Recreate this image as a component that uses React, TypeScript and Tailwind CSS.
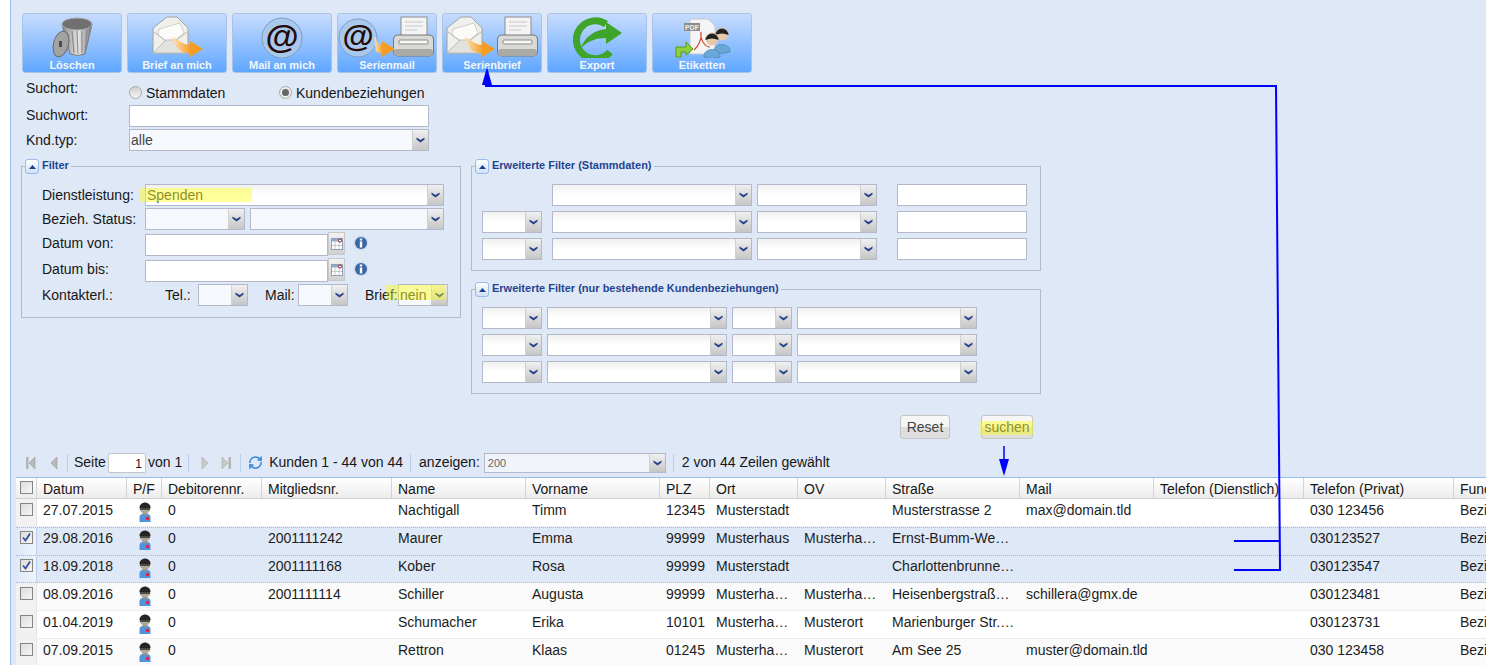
import React from 'react';
import { RefreshCw } from 'lucide-react';

const rowGrid =
  'grid grid-cols-[21px_90px_35px_100px_130px_134px_134px_50px_88px_88px_134px_134px_150px_150px_100px] w-[1500px]';

const headers = ['Datum', 'P/F', 'Debitorennr.', 'Mitgliedsnr.', 'Name', 'Vorname', 'PLZ', 'Ort', 'OV', 'Straße', 'Mail', 'Telefon (Dienstlich)', 'Telefon (Privat)', 'Function'];

const rows = [
  { datum: '27.07.2015', mitglied: '', name: 'Nachtigall', vorname: 'Timm', plz: '12345', ort: 'Musterstadt', ov: '', strasse: 'Musterstrasse 2', mail: 'max@domain.tld', privat: '030 123456', kind: 'white' },
  { datum: '29.08.2016', mitglied: '2001111242', name: 'Maurer', vorname: 'Emma', plz: '99999', ort: 'Musterhaus', ov: 'Musterha…', strasse: 'Ernst-Bumm-We…', mail: '', privat: '030123527', kind: 'selected' },
  { datum: '18.09.2018', mitglied: '2001111168', name: 'Kober', vorname: 'Rosa', plz: '99999', ort: 'Musterstadt', ov: '', strasse: 'Charlottenbrunne…', mail: '', privat: '030123547', kind: 'selectedLast' },
  { datum: '08.09.2016', mitglied: '2001111114', name: 'Schiller', vorname: 'Augusta', plz: '99999', ort: 'Musterha…', ov: 'Musterha…', strasse: 'Heisenbergstraß…', mail: 'schillera@gmx.de', privat: '030123481', kind: 'alt' },
  { datum: '01.04.2019', mitglied: '', name: 'Schumacher', vorname: 'Erika', plz: '10101', ort: 'Musterha…', ov: 'Musterort', strasse: 'Marienburger Str.…', mail: '', privat: '030123731', kind: 'white' },
  { datum: '07.09.2015', mitglied: '', name: 'Rettron', vorname: 'Klaas', plz: '01245', ort: 'Musterha…', ov: 'Musterort', strasse: 'Am See 25', mail: 'muster@domain.tld', privat: '030 123458', kind: 'alt' },
];

function Envelope({ x = 0 }: { x?: number }) {
  return (
    <g transform={`translate(${x} 0)`}>
      <path d="M0 14 L14 3 H24 L35 14 V39 H0 Z" fill="#efefec" stroke="#a2a29e" strokeLinejoin="round" />
      <path d="M5 21 L6 15 L27 9 L31 19 L18 30 Z" fill="#fbfbfa" stroke="#cfcfcc" />
      <path d="M0 39 L13 26 L22 26 L35 39 Z" fill="#e2e2df" stroke="#bcbcb8" />
      <path d="M1 18 L13 27 M34 18 L22 27" stroke="#b9b9b5" fill="none" />
    </g>
  );
}

function OrangeArrow({ x1, tip }: { x1: number; tip: number }) {
  const base = tip - 13;
  return (
    <g>
      <path d={`M${x1} 23 C${x1 + 5} 24 ${base - 8} 31 ${base + 1} 31 V39 C${base - 10} 40 ${x1 + 3} 33 ${x1} 23 Z`} fill="url(#orange)" />
      <path d={`M${base} 27 L${tip} 35 L${base} 43 Z`} fill="#f59c25" />
    </g>
  );
}

function Printer({ x }: { x: number }) {
  return (
    <g transform={`translate(${x} 0)`}>
      <rect x="8" y="3" width="26" height="22" fill="#f4f4f4" stroke="#8d8d8d" />
      <path d="M12 8 H30 M12 12 H30 M12 16 H24" stroke="#c8c8c8" />
      <rect x="0.5" y="21" width="40" height="21" rx="4" fill="#d9d9d6" stroke="#77777a" />
      <rect x="6" y="26" width="29" height="4" rx="1" fill="#f7f7f5" stroke="#8b8b8b" />
      <rect x="1" y="35" width="39" height="7" rx="3" fill="#a9a9a6" />
    </g>
  );
}

function AtCircle({ cx, r, size }: { cx: number; r: number; size: number }) {
  return (
    <g>
      <circle cx={cx} cy={24} r={r} fill="#a9c9ec" stroke="#7c9cc4" />
      <text x={cx} y={24 + size * 0.29} textAnchor="middle" fontSize={size} fontWeight="700" fontFamily="Liberation Sans, sans-serif" fill="#260a0a">
        @
      </text>
    </g>
  );
}

function Buddy({ cx, cy }: { cx: number; cy: number }) {
  return (
    <g>
      <path d={`M${cx - 8} ${cy + 18} C${cx - 9} ${cy + 8} ${cx + 9} ${cy + 8} ${cx + 8} ${cy + 18} Q${cx} ${cy + 21} ${cx - 8} ${cy + 18} Z`} fill="#6aa7d6" stroke="#3f7fb2" strokeWidth="0.6" />
      <circle cx={cx} cy={cy} r={6.5} fill="#e7c9a8" />
      <path d={`M${cx - 6.5} ${cy + 1} A6.5 6.5 0 0 1 ${cx + 6.5} ${cy + 1} Q${cx} ${cy - 2} ${cx - 6.5} ${cy + 1} Z`} fill="#222" />
    </g>
  );
}

function ToolIcon({ kind }: { kind: string }) {
  return (
    <svg width="98" height="44" viewBox="0 0 98 44" className="block shrink-0">
      <defs>
        <linearGradient id="can" x1="0" x2="1" y1="0" y2="0">
          <stop offset="0" stopColor="#858585" />
          <stop offset="0.55" stopColor="#e6e6e6" />
          <stop offset="1" stopColor="#777" />
        </linearGradient>
        <linearGradient id="orange" x1="0" x2="1" y1="0" y2="0">
          <stop offset="0" stopColor="#fbe3bb" />
          <stop offset="1" stopColor="#f59c25" />
        </linearGradient>
      </defs>
      {kind === 'trash' && (
        <g>
          <path d="M39 10 L47 40 Q55 43 62 40 L69 10 Z" fill="url(#can)" stroke="#777" />
          <path d="M49 17 L51 39 M54 17 L55 40 M59 17 L59 39 M64 16 L62 38" stroke="#888" strokeWidth="1.1" />
          <ellipse cx="54" cy="10" rx="15" ry="6" fill="#707070" stroke="#a8a8a8" />
          <ellipse cx="38" cy="30" rx="7.5" ry="13" transform="rotate(15 38 30)" fill="#a2a2a2" stroke="#6a6a6a" />
          <rect x="36" y="27" width="3" height="6" fill="#4c4c4c" />
        </g>
      )}
      {kind === 'brief' && (
        <g>
          <Envelope x={25} />
          <OrangeArrow x1={44} tip={75} />
        </g>
      )}
      {kind === 'mail' && <AtCircle cx={49} r={20} size={34} />}
      {kind === 'serienmail' && (
        <g>
          <AtCircle cx={20} r={19} size={32} />
          <Printer x={55} />
          <OrangeArrow x1={36} tip={57} />
        </g>
      )}
      {kind === 'serienbrief' && (
        <g>
          <Envelope x={4} />
          <Printer x={54} />
          <OrangeArrow x1={22} tip={52} />
        </g>
      )}
      {kind === 'export' && (
        <g>
          <path d="M58 10 A19 19 0 1 0 62 38" fill="none" stroke="#3ea42a" strokeWidth="7" />
          <path d="M33 34 C36 24 46 16 58 15 V8 L74 19 L58 30 V24 C48 24 40 27 33 34 Z" fill="#3ea42a" />
        </g>
      )}
      {kind === 'etiketten' && (
        <g>
          <path d="M37 5 H55 L62 12 V40 H37 Z" fill="#f5f5f5" stroke="#c8c8c8" />
          <rect x="31" y="9" width="16" height="8" fill="#8c8c8c" />
          <text x="39" y="15.5" textAnchor="middle" fontSize="7" fontWeight="700" fontFamily="Liberation Sans, sans-serif" fill="#f0f0f0">
            PDF
          </text>
          <path d="M41 36 C46 32 49 24 48 18 C47 26 52 33 57 33" fill="none" stroke="#d24a3a" strokeWidth="1.2" />
          <path d="M23 43 V33 H33 V28 L40 35 L33 41 V38 H28 V43 Z" fill="#8fce3f" stroke="#5a9a1e" />
          <Buddy cx={69} cy={20} />
          <Buddy cx={59} cy={25} />
        </g>
      )}
    </svg>
  );
}

function ToolButton({ kind, label }: { kind: string; label: string }) {
  return (
    <div className="w-[100px] h-[60px] shrink-0 flex flex-col items-center rounded-[3px] border border-[#a9c3e8] bg-gradient-to-b from-[#c7dcfd] to-[#5da6ff]">
      <ToolIcon kind={kind} />
      <span className="text-[11px] leading-[14px] font-bold text-[#f2f6fb] whitespace-nowrap">{label}</span>
    </div>
  );
}

function Select({ width, value, tint }: { width: string; value?: string; tint?: boolean }) {
  return (
    <div className={`${width} h-[22px] shrink-0 flex border border-[#b5b8c8] ${tint ? 'bg-[#f5f8fd]' : 'bg-gradient-to-b from-[#f0f0f0] via-white to-white'}`}>
      <span className="flex-1 min-w-0 pl-[1px] leading-[20px] text-[#444] whitespace-nowrap overflow-hidden">{value}</span>
      <span className="w-[16px] shrink-0 flex items-center justify-center border-l border-[#d0d0d0] bg-gradient-to-b from-[#f0f0f0] to-[#c6c6c6]">
        <svg width="9" height="6" viewBox="0 0 9 6">
          <path d="M0.5 0.5 L4.5 3 L8.5 0.5 V2.5 L4.5 5.5 L0.5 2.5 Z" fill="#24418a" />
        </svg>
      </span>
    </div>
  );
}

function Legend({ title }: { title: string }) {
  return (
    <div className="absolute -top-[8px] left-[3px] flex items-center bg-[#dfe8f6] pr-[2px] h-[15px]">
      <span className="w-[14px] h-[15px] flex items-center justify-center rounded-[3px] border border-[#99bbe8] bg-gradient-to-b from-white to-[#cfe0f7]">
        <svg width="7" height="4" viewBox="0 0 7 4">
          <path d="M3.5 0 L7 4 H0 Z" fill="#1f3f8a" />
        </svg>
      </span>
      <span className="ml-[3px] pb-[3px] text-[11px] leading-[14px] font-bold text-[#1f4490] whitespace-nowrap">{title}</span>
    </div>
  );
}

function TextBox({ width }: { width: string }) {
  return <div className={`${width} h-[22px] shrink-0 bg-white border border-[#b5b8c8]`} />;
}

function InfoIcon() {
  return (
    <svg width="16" height="16" viewBox="0 0 16 16" className="ml-[8px] mt-[1px] shrink-0">
      <circle cx="8" cy="8" r="7.5" fill="#cfdcee" />
      <circle cx="8" cy="8" r="6" fill="#3a66a6" />
      <rect x="6.8" y="3.5" width="2.4" height="2" fill="#fff" />
      <rect x="6.8" y="6.5" width="2.4" height="6" fill="#fff" />
    </svg>
  );
}

function DateField() {
  return (
    <div className="flex items-start h-[22px]">
      <TextBox width="w-[183px]" />
      <div className="w-[17px] h-[23px] -mt-[2px] shrink-0 flex items-center justify-center border border-[#c8c8c8] bg-gradient-to-b from-[#f2f2f2] to-[#d0d0d0]">
        <svg width="12" height="12" viewBox="0 0 12 12">
          <rect x="0.5" y="0.5" width="11" height="11" fill="#fff" stroke="#8aa0bc" />
          <rect x="0.5" y="0.5" width="11" height="3" fill="#8fa9c9" />
          <path d="M4 4 V11 M8 4 V11 M1 7.5 H11" stroke="#c6c6c6" />
          <circle cx="9" cy="2.5" r="1.6" fill="#fff" stroke="#a01818" />
        </svg>
      </div>
      <InfoIcon />
    </div>
  );
}

function Sep() {
  return <span className="w-px h-[18px] bg-[#b7cde9] shrink-0" />;
}

function PageIcon({ dir, bar }: { dir: 'left' | 'right'; bar?: boolean }) {
  return (
    <svg width="10" height="14" viewBox="0 0 10 14" className="shrink-0">
      {dir === 'left' ? (
        <g>
          {bar && <rect x="0" y="1" width="2.5" height="12" fill="#b4b4b4" />}
          <path d="M9 1 V13 L3 7 Z" fill="#b9b9b9" stroke="#999" strokeWidth="0.6" />
        </g>
      ) : (
        <g>
          <path d="M1 1 V13 L7 7 Z" fill="#c9c9c9" stroke="#aaa" strokeWidth="0.6" />
          {bar && <rect x="7.5" y="1" width="2.5" height="12" fill="#b4b4b4" />}
        </g>
      )}
    </svg>
  );
}

function CheckBox({ checked }: { checked?: boolean }) {
  return (
    <span className="w-[13px] h-[13px] flex items-center justify-center border border-[#858585] bg-gradient-to-br from-[#dcdcdc] to-[#f6f6f6]">
      {checked && (
        <svg width="11" height="11" viewBox="0 0 11 11">
          <path d="M2 5.5 L4.5 8.5 L9 1.5" fill="none" stroke="#34509c" strokeWidth="1.8" />
        </svg>
      )}
    </span>
  );
}

function PersonIcon() {
  return (
    <svg width="14" height="21" viewBox="0 0 14 21">
      <path d="M1.5 20 V15.5 Q1.5 12 5 12 H9 Q12.5 12 12.5 15.5 V20 Z" fill="#4d93dd" />
      <rect x="4.5" y="10.5" width="5" height="3" fill="#8a9298" />
      <circle cx="7" cy="6" r="5.5" fill="#b3a898" />
      <path d="M1.5 6 A5.5 5.5 0 0 1 12.5 6 Z" fill="#252525" />
      <rect x="2" y="6" width="10" height="2" fill="#4a4a4a" />
      <circle cx="9.5" cy="16.5" r="1.7" fill="#e8213a" />
    </svg>
  );
}

function Cell({ children }: { children?: React.ReactNode }) {
  return <div className="pl-[6px] whitespace-nowrap overflow-hidden">{children}</div>;
}

export default function App() {
  return (
    <div className="relative w-[1486px] h-[665px] overflow-hidden flex bg-[#dfe8f6] text-[14px] text-[#161616] font-['Liberation_Sans',sans-serif]">
      <div className="w-[11px] shrink-0 bg-white border-r border-[#99bbe8]" />

      <div className="flex-1 min-w-0 flex flex-col">
        {/* Toolbar */}
        <div className="flex gap-[5px] pt-[13px] pl-[11px]">
          <ToolButton kind="trash" label="Löschen" />
          <ToolButton kind="brief" label="Brief an mich" />
          <ToolButton kind="mail" label="Mail an mich" />
          <ToolButton kind="serienmail" label="Serienmail" />
          <ToolButton kind="serienbrief" label="Serienbrief" />
          <ToolButton kind="export" label="Export" />
          <ToolButton kind="etiketten" label="Etiketten" />
        </div>

        {/* Suche */}
        <div className="pl-[15px] mt-[6px]">
          <div className="flex h-[26px]">
            <span className="w-[103px] leading-[18px]">Suchort:</span>
            <div className="flex items-start pt-[5px] leading-[18px]">
              <span className="w-[13px] h-[13px] mt-[2px] rounded-full border border-[#a8a8a8] bg-gradient-to-b from-[#d0d0d0] to-[#f4f4f4]" />
              <span className="ml-[4px] w-[133px]">Stammdaten</span>
              <span className="w-[13px] h-[13px] mt-[2px] rounded-full border border-[#a8a8a8] bg-[#ececec] flex items-center justify-center">
                <span className="w-[7px] h-[7px] rounded-full bg-[#666]" />
              </span>
              <span className="ml-[4px]">Kundenbeziehungen</span>
            </div>
          </div>
          <div className="flex items-center h-[22px]">
            <span className="w-[103px] pb-[2px]">Suchwort:</span>
            <TextBox width="w-[300px]" />
          </div>
          <div className="flex items-center h-[22px] mt-[2px]">
            <span className="w-[103px]">Knd.typ:</span>
            <Select width="w-[300px]" value="alle" tint />
          </div>
        </div>

        {/* Filter */}
        <div className="flex items-start mt-[15px] pl-[10px]">
          <div className="relative w-[440px] h-[152px] shrink-0 border border-[#b5b8c8] pt-[17px] pl-[20px]">
            <Legend title="Filter" />
            <div className="flex items-center">
              <span className="w-[103px]">Dienstleistung:</span>
              <Select width="w-[299px]" value="Spenden" />
            </div>
            <div className="flex items-center gap-[5px] mt-[2px]">
              <span className="w-[98px]">Bezieh. Status:</span>
              <Select width="w-[100px]" tint />
              <Select width="w-[194px]" tint />
            </div>
            <div className="flex items-center mt-[4px]">
              <span className="w-[103px] pb-[4px] leading-[18px]">Datum von:</span>
              <DateField />
            </div>
            <div className="flex items-center mt-[4px]">
              <span className="w-[103px] pb-[4px] leading-[18px]">Datum bis:</span>
              <DateField />
            </div>
            <div className="flex items-center mt-[2px]">
              <span className="w-[123px]">Kontakterl.:</span>
              <span className="w-[33px]">Tel.:</span>
              <Select width="w-[50px]" tint />
              <span className="w-[33px] ml-[17px]">Mail:</span>
              <Select width="w-[50px]" tint />
              <span className="w-[33px] ml-[17px]">Brief:</span>
              <Select width="w-[50px]" value="nein" tint />
            </div>
          </div>

          <div className="ml-[10px] flex flex-col">
            <div className="relative w-[570px] h-[105px] border border-[#b5b8c8] pt-[17px] pl-[10px]">
              <Legend title="Erweiterte Filter (Stammdaten)" />
              <div className="flex flex-col gap-[5px]">
                {[false, true, true].map((first, i) => (
                  <div key={i} className="flex">
                    {first ? <Select width="w-[60px]" /> : <div className="w-[60px] shrink-0" />}
                    <div className="ml-[10px]">
                      <Select width="w-[200px]" />
                    </div>
                    <div className="ml-[5px]">
                      <Select width="w-[120px]" />
                    </div>
                    <div className="ml-[20px]">
                      <TextBox width="w-[130px]" />
                    </div>
                  </div>
                ))}
              </div>
            </div>

            <div className="relative w-[570px] h-[105px] mt-[18px] border border-[#b5b8c8] pt-[17px] pl-[10px]">
              <Legend title="Erweiterte Filter (nur bestehende Kundenbeziehungen)" />
              <div className="flex flex-col gap-[5px]">
                {[0, 1, 2].map((i) => (
                  <div key={i} className="flex gap-[5px]">
                    <Select width="w-[60px]" />
                    <Select width="w-[180px]" />
                    <Select width="w-[60px]" />
                    <Select width="w-[180px]" />
                  </div>
                ))}
              </div>
            </div>

            <div className="flex mt-[21px] pl-[429px]">
              <div className="w-[50px] h-[24px] rounded-[3px] border border-[#c4c4c4] bg-gradient-to-b from-[#f6f6f6] from-50% to-[#dedede] to-50% text-center leading-[22px] text-[#444]">Reset</div>
              <div className="w-[52px] h-[24px] ml-[31px] rounded-[3px] border border-[#c4c4c4] bg-gradient-to-b from-[#f6f6f6] from-50% to-[#dedede] to-50% text-center leading-[22px] text-[#444]">suchen</div>
            </div>
          </div>
        </div>

        {/* Pager */}
        <div className="flex items-center h-[22px] mt-[13px] pl-[15px] whitespace-nowrap">
          <PageIcon dir="left" bar />
          <span className="ml-[12px]"><PageIcon dir="left" /></span>
          <span className="ml-[9px] flex"><Sep /></span>
          <span className="ml-[6px]">Seite</span>
          <div className="ml-[2px] w-[38px] h-[20px] bg-white border border-[#c5c5c5] rounded-[2px] text-right pr-[3px] text-[12px] leading-[20px]">1</div>
          <span className="ml-[2px]">von 1</span>
          <span className="ml-[6px] flex"><Sep /></span>
          <span className="ml-[12px]"><PageIcon dir="right" /></span>
          <span className="ml-[10px]"><PageIcon dir="right" bar /></span>
          <span className="ml-[9px] flex"><Sep /></span>
          <RefreshCw size={15} strokeWidth={2.4} className="ml-[7px] text-[#3b87d6] shrink-0" />
          <span className="ml-[6px]">Kunden 1 - 44 von 44</span>
          <span className="ml-[7px] flex"><Sep /></span>
          <span className="ml-[8px]">anzeigen:</span>
          <div className="ml-[4px] w-[182px] h-[20px] flex border border-[#b5b8c8] bg-[#f0f4fa]">
            <span className="flex-1 pl-[3px] text-[11px] leading-[18px] text-[#666]">200</span>
            <span className="w-[16px] flex items-center justify-center border-l border-[#d0d0d0] bg-gradient-to-b from-[#f0f0f0] to-[#c6c6c6]">
              <svg width="9" height="6" viewBox="0 0 9 6">
                <path d="M0.5 0.5 L4.5 3 L8.5 0.5 V2.5 L4.5 5.5 L0.5 2.5 Z" fill="#24418a" />
              </svg>
            </span>
          </div>
          <span className="ml-[7px] flex"><Sep /></span>
          <span className="ml-[8px]">2 von 44 Zeilen gewählt</span>
        </div>

        {/* Tabelle */}
        <div className="ml-[5px] mt-[3px] border-t border-[#99bbe8] overflow-hidden">
          <div className={`${rowGrid} h-[21px] items-stretch border-b border-[#d0d0d0] bg-gradient-to-b from-white to-[#ececec]`}>
            <div className="flex items-center justify-center border-r border-[#d4d4d4]">
              <CheckBox />
            </div>
            {headers.map((h) => (
              <div key={h} className="pl-[6px] leading-[22px] whitespace-nowrap overflow-hidden border-r border-[#d4d4d4]">
                {h}
              </div>
            ))}
          </div>
          {rows.map((r) => {
            const selected = r.kind === 'selected' || r.kind === 'selectedLast';
            return (
              <div
                key={r.datum}
                className={`${rowGrid} h-[28px] text-[#1c1c1c] ${
                  r.kind === 'selectedLast'
                    ? 'bg-[#dfe8f6] border-t border-b border-dotted border-[#a3bae9] leading-[20px]'
                    : r.kind === 'selected'
                      ? 'bg-[#dfe8f6] border-t border-dotted border-[#a3bae9] leading-[20px]'
                      : r.kind === 'alt'
                        ? 'bg-[#fafafa] border-b border-[#ededed] leading-[22px]'
                        : 'bg-white border-b border-[#ededed] leading-[22px]'
                }`}
              >
                <div className={`flex justify-center border-r ${selected ? 'pt-[3px] border-[#bcd0ee] bg-gradient-to-r from-[#dfe8f6] to-[#eef4fc]' : 'pt-[4px] border-[#e4e4e4] bg-[#f1f1f1]'}`}>
                  <CheckBox checked={selected} />
                </div>
                <Cell>{r.datum}</Cell>
                <div className={`flex justify-center ${selected ? 'pt-[2px]' : 'pt-[3px]'}`}>
                  <PersonIcon />
                </div>
                <Cell>0</Cell>
                <Cell>{r.mitglied}</Cell>
                <Cell>{r.name}</Cell>
                <Cell>{r.vorname}</Cell>
                <Cell>{r.plz}</Cell>
                <Cell>{r.ort}</Cell>
                <Cell>{r.ov}</Cell>
                <Cell>{r.strasse}</Cell>
                <Cell>{r.mail}</Cell>
                <Cell />
                <Cell>{r.privat}</Cell>
                <Cell>Bezieh</Cell>
              </div>
            );
          })}
        </div>
      </div>

      {/* Markierungen ueber dem Screenshot */}
      <div className="absolute left-[139px] top-[188px] w-[113px] h-[14px] bg-[#ffff00]/40" />
      <div className="absolute left-[386px] top-[285px] w-[60px] h-[15px] bg-[#ffff00]/40" />
      <div className="absolute left-[980px] top-[421px] w-[53px] h-[14px] bg-[#ffff00]/40" />
      <svg width="1486" height="665" className="absolute left-0 top-0 pointer-events-none">
        <path d="M485 86 H1276 L1280 569" fill="none" stroke="#0000ff" strokeWidth="2" />
        <path d="M487 67 L492 85 H482 Z" fill="#0000ff" />
        <path d="M1234 541 H1280 M1234 570 H1281" stroke="#0000ff" strokeWidth="2" fill="none" />
        <path d="M1004 446 V460" stroke="#0000ff" strokeWidth="1.5" />
        <path d="M999 459 H1009 L1004 476 Z" fill="#0000ff" />
      </svg>
    </div>
  );
}
